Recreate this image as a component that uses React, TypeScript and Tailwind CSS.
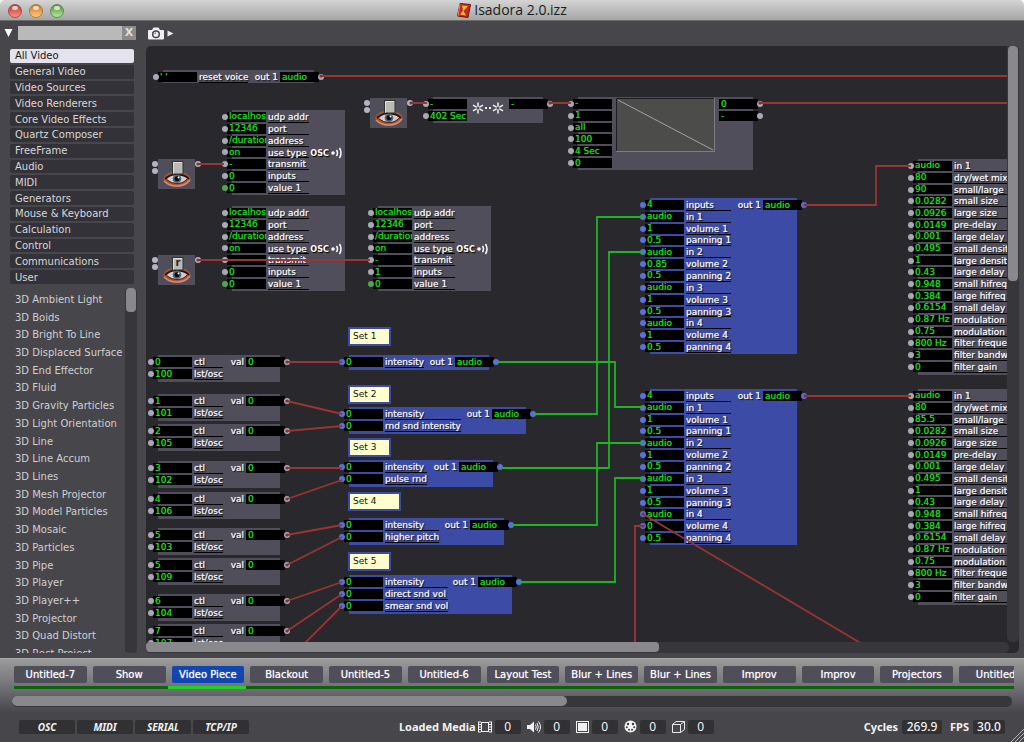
import React from "react";

type Tone = "grey" | "blue";
type Row = [value: string, label?: string];

interface ActorData {
  x: number;
  y: number;
  w: number;
  h: number;
  tone: Tone;
  rows: Row[];
  outs?: Row[];
  greenLast?: boolean;
  extra?: "osc" | "trigger" | "graph";
}

const rowsHeight = (count: number) => Math.round((count * 71) / 6);

const categories = [
  "All Video", "General Video", "Video Sources", "Video Renderers", "Core Video Effects",
  "Quartz Composer", "FreeFrame", "Audio", "MIDI", "Generators", "Mouse & Keyboard",
  "Calculation", "Control", "Communications", "User",
];

const actorNames = [
  "3D Ambient Light", "3D Boids", "3D Bright To Line", "3D Displaced Surface", "3D End Effector",
  "3D Fluid", "3D Gravity Particles", "3D Light Orientation", "3D Line", "3D Line Accum",
  "3D Lines", "3D Mesh Projector", "3D Model Particles", "3D Mosaic", "3D Particles", "3D Pipe",
  "3D Player", "3D Player++", "3D Projector", "3D Quad Distort", "3D Rect Project",
];

const scenes = [
  "Untitled-7", "Show", "Video Piece", "Blackout", "Untitled-5", "Untitled-6", "Layout Test",
  "Blur + Lines", "Blur + Lines", "Improv", "Improv", "Projectors", "Untitled",
];

const oscRows = (transmit: string, inputs: string): Row[] => [
  ["localhost", "udp addr"],
  ["12346", "port"],
  ["/duration", "address"],
  ["on", "use type"],
  [transmit, "transmit"],
  [inputs, "inputs"],
  ["0", "value 1"],
];

const mixerRows = (volume2: string, volume4: string): Row[] => [
  ["4", "inputs"],
  ["audio", "in 1"], ["1", "volume 1"], ["0.5", "panning 1"],
  ["audio", "in 2"], [volume2, "volume 2"], ["0.5", "panning 2"],
  ["audio", "in 3"], ["1", "volume 3"], ["0.5", "panning 3"],
  ["audio", "in 4"], [volume4, "volume 4"], ["0.5", "panning 4"],
];

const reverbRows = (size: string): Row[] => [
  ["audio", "in 1"], ["80", "dry/wet mix"], [size, "small/large"], ["0.0282", "small size"],
  ["0.0926", "large size"], ["0.0149", "pre-delay"], ["0.001", "large delay"],
  ["0.495", "small density"], ["1", "large density"], ["0.43", "large delay"],
  ["0.948", "small hifreq"], ["0.384", "large hifreq"], ["0.6154", "small delay"],
  ["0.87 Hz", "modulation"], ["0.75", "modulation"], ["800 Hz", "filter frequency"],
  ["3", "filter bandwidth"], ["0", "filter gain"],
];

const control = (y: number, value: string, id: string): ActorData => ({
  x: 153, y, w: 132, h: 27, tone: "grey",
  rows: [[value, "ctl"], [id, "lst/osc"]],
  outs: [["0", "val"]],
});

const soundSet = (y: number, w: number, h: number, labels: string[]): ActorData => ({
  x: 344, y, w, h, tone: "blue",
  rows: labels.map((label): Row => ["0", label]),
  outs: [["audio", "out 1"]],
});

const actors: ActorData[] = [
  { x: 158, y: 70, w: 161, h: 13, tone: "grey", rows: [["' '", "reset voice"]], outs: [["audio", "out 1"]] },
  { x: 227, y: 110, w: 118, h: 85, tone: "grey", rows: oscRows("-", "0"), greenLast: true, extra: "osc" },
  { x: 227, y: 206, w: 118, h: 85, tone: "grey", rows: oscRows("", "0"), greenLast: true, extra: "osc" },
  { x: 373, y: 206, w: 118, h: 85, tone: "grey", rows: oscRows("-", "1"), greenLast: true, extra: "osc" },
  { x: 428, y: 97, w: 120, h: 26, tone: "grey", rows: [["-"], ["402 Sec"]], outs: [["-"]], extra: "trigger" },
  {
    x: 573, y: 97, w: 185, h: 73, tone: "grey",
    rows: [["-"], ["1"], ["all"], ["100"], ["4 Sec"], ["0"]],
    outs: [["0"], ["-"]],
    extra: "graph",
  },
  { x: 645, y: 198, w: 157, h: 156, tone: "blue", rows: mixerRows("0.85", "1"), outs: [["audio", "out 1"]] },
  { x: 645, y: 389, w: 157, h: 156, tone: "blue", rows: mixerRows("1", "0"), outs: [["audio", "out 1"]] },
  { x: 913, y: 159, w: 150, h: 216, tone: "grey", rows: reverbRows("90") },
  { x: 913, y: 389, w: 150, h: 216, tone: "grey", rows: reverbRows("85.5") },
  control(355, "0", "100"),
  control(394, "1", "101"),
  control(424, "2", "105"),
  control(461, "3", "102"),
  control(492, "4", "106"),
  control(528, "5", "103"),
  control(558, "5", "109"),
  control(594, "6", "104"),
  control(624, "7", "107"),
  soundSet(355, 150, 15, ["intensity"]),
  soundSet(407, 187, 27, ["intensity", "rnd snd intensity"]),
  soundSet(460, 154, 27, ["intensity", "pulse rnd"]),
  soundSet(518, 165, 27, ["intensity", "higher pitch"]),
  soundSet(575, 173, 39, ["intensity", "direct snd vol", "smear snd vol"]),
];

const notes = [
  { y: 327, w: 43, text: "Set 1" },
  { y: 385, w: 43, text: "Set 2" },
  { y: 438, w: 43, text: "Set 3" },
  { y: 492, w: 53, text: "Set 4" },
  { y: 552, w: 43, text: "Set 5" },
];

const watchers = [
  { x: 158, y: 159, key: "" },
  { x: 158, y: 255, key: "r" },
  { x: 370, y: 98, key: "" },
];

const redWires = [
  "321,76 1010,76",
  "411,103 427,103",
  "550,103 571,103",
  "760,103 1010,103",
  "198,164 224,164",
  "198,260 370,260",
  "287,362 342,362",
  "287,401 342,414",
  "287,431 342,426",
  "287,468 342,468",
  "287,499 342,480",
  "287,535 342,525",
  "287,565 342,537",
  "287,601 342,582",
  "287,631 342,594",
  "298,650 342,606",
  "805,205 876,205 876,166 911,166",
  "805,396 911,396",
  "643,526 635,526 635,650",
  "643,514 874,651",
];

const greenWires = [
  "497,362 615,362 615,407 643,407",
  "534,414 597,414 597,217 643,217",
  "501,468 609,468 609,252 643,252",
  "511,525 597,525 597,443 643,443",
  "519,582 615,582 615,478 643,478",
];

function Dot({ tone, side }: { tone: Tone | "green"; side: "in" | "out" }) {
  const colour = tone === "blue" ? "bg-[#5a70de]" : tone === "green" ? "bg-[#4fa552]" : "bg-[#a9a8b6]";
  const place = side === "in" ? "-left-[5px]" : "-right-[5px]";
  return <i className={`absolute top-1/2 size-[6px] -translate-y-1/2 rounded-full ${colour} ${place}`} />;
}

function Values({ rows, tone, side, greenLast }: { rows: Row[]; tone: Tone; side: "in" | "out"; greenLast?: boolean }) {
  return (
    <div
      className="grid w-[39px] shrink-0 auto-rows-fr grid-cols-[minmax(0,1fr)]"
      style={{ height: rowsHeight(rows.length) }}
    >
      {rows.map(([value], i) => (
        <div key={i} className="relative flex min-h-0 items-center py-px">
          <Dot tone={greenLast && i === rows.length - 1 ? "green" : tone} side={side} />
          <span className="flex h-full w-full items-center overflow-hidden bg-black pl-[2px] text-[#24e024] [text-shadow:0_0_1px_#16a016]">
            {value}
          </span>
        </div>
      ))}
    </div>
  );
}

function Labels({ rows, line }: { rows: Row[]; line: boolean }) {
  return (
    <div className="grid shrink-0 auto-rows-fr" style={{ height: rowsHeight(rows.length) }}>
      {rows.map(([, label], i) => (
        <span
          key={i}
          className={`flex min-h-0 items-center border-b pt-[2px] text-[#f8f8fa] [text-shadow:0_0_1px_#d8d8e0,1px_1px_1px_#000] ${line ? "border-black" : "border-transparent"}`}
        >
          {label}
        </span>
      ))}
    </div>
  );
}

function OscMark() {
  return (
    <span className="absolute top-[37px] right-[2px] flex items-center gap-px text-white [text-shadow:1px_1px_1px_#000]">
      <b className="font-['DejaVu_Sans_Condensed','DejaVu_Sans',sans-serif] text-[9px] leading-[12px]">OSC</b>
      <svg width="13" height="12" viewBox="0 0 13 12" fill="none" stroke="#fff" strokeWidth="1.5">
        <circle cx="3" cy="6" r="1.8" fill="#fff" stroke="none" />
        <path d="M6.5 3Q8.500 6 6.500 9M9.500 1Q12.500 6 9.500 11" />
      </svg>
    </span>
  );
}

function TriggerMark() {
  const star = "M0-5.500V5.500M-5-2.800L5 2.800M-5 2.800L5-2.800";
  return (
    <svg className="absolute top-[3px] left-[43px]" width="34" height="16" viewBox="0 0 34 16" stroke="#f2f2f2" strokeWidth="1.500">
      <g transform="translate(7 8)"><path d={star} /><circle r="1.500" fill="#504e5a" stroke="none" /></g>
      <g transform="translate(27 8)"><path d={star} /><circle r="1.500" fill="#504e5a" stroke="none" /></g>
      <path d="M14 8h2M18 8h2" strokeWidth="2" />
    </svg>
  );
}

function GraphMark() {
  return (
    <svg className="absolute top-px left-[43px]" width="99" height="54" viewBox="0 0 99 54">
      <rect x="0.500" y="0.500" width="98" height="53" fill="#4c4c4b" stroke="#7d7d7a" />
      <path d="M0.500 53V0.500H98" fill="none" stroke="#1c1c20" />
      <path d="M2 2L97 52" stroke="#a2a29f" />
    </svg>
  );
}

function Actor({ actor }: { actor: ActorData }) {
  const { x, y, w, h, tone, rows, outs, greenLast, extra } = actor;
  const labelled = rows.some(([, label]) => label);
  return (
    <section className="absolute" style={{ left: x, top: y, width: w, height: h }}>
      <div
        className={`absolute inset-y-0 left-[5px] ${outs ? "right-[5px]" : "right-0"} ${tone === "blue" ? "bg-[#3b4ba6]" : "bg-[#504e5a]"}`}
      />
      <div className="relative flex gap-[2px] pt-px">
        <Values rows={rows} tone={tone} side="in" greenLast={greenLast} />
        {labelled && <Labels rows={rows} line />}
        {outs && (
          <div className="ml-auto flex gap-[2px]">
            {outs[0][1] && <Labels rows={outs} line={false} />}
            <Values rows={outs} tone={tone} side="out" />
          </div>
        )}
      </div>
      {extra === "osc" && <OscMark />}
      {extra === "trigger" && <TriggerMark />}
      {extra === "graph" && <GraphMark />}
    </section>
  );
}

function Watcher({ x, y, label }: { x: number; y: number; label: string }) {
  return (
    <div className="absolute h-[30px] w-[37px] bg-[#504e5a]" style={{ left: x, top: y }}>
      <i className="absolute top-[2px] -left-[6px] size-[6px] rounded-full bg-[#b4b3c0]" />
      <i className="absolute top-[9px] -left-[6px] size-[6px] rounded-full bg-[#b4b3c0]" />
      <i className="absolute top-[2px] -right-[6px] size-[6px] rounded-full bg-[#b4b3c0]" />
      <svg width="37" height="30" viewBox="0 0 37 30">
        <path d="M5 20Q8 12.500 19 12.500Q30 12.500 33 20Q30 28 19 28Q8 28 5 20Z" fill="#a4553c" />
        <path d="M6 22Q11 27 19 27Q27 27 32 21" fill="none" stroke="#d58d70" strokeWidth="1.600" />
        <path d="M9 20Q13 16 19 16Q26 16 29 19.500Q25 24 19 24Q13 24 9 20Z" fill="#cfccd2" />
        <path d="M7 20Q12 15 19 15.500Q27 15.500 31 20" fill="none" stroke="#2b1512" strokeWidth="1.800" />
        <path d="M9 21Q13 24.500 19 24.500Q26 24.500 29 20" fill="none" stroke="#57281f" />
        <circle cx="19" cy="19.800" r="4.300" fill="#56646f" />
        <circle cx="19" cy="19.800" r="2.500" fill="#0c0d10" />
        <circle cx="20.500" cy="18.500" r="0.900" fill="#fff" />
        <rect x="14.500" y="2.500" width="10.500" height="12.500" fill="#b9b9b5" stroke="#33312f" />
        <path d="M15.500 14.500V3.500H24" fill="none" stroke="#dededb" />
      </svg>
      <b className="absolute inset-x-0 top-[2px] pl-[3px] text-center text-[10px] leading-[12px] text-[#26252a]">{label}</b>
    </div>
  );
}

function Patch() {
  return (
    <div className="absolute -top-[46px] -left-[146px] text-[9px] leading-[9px] whitespace-nowrap">
      {actors.map((actor, i) => <Actor key={i} actor={actor} />)}
      {watchers.map((item, i) => <Watcher key={i} x={item.x} y={item.y} label={item.key} />)}
      {notes.map((note) => (
        <div
          key={note.text}
          className="absolute flex h-[19px] items-center border-2 border-[#3b4ba6] bg-[#ffffce] pl-[3px] text-[#111]"
          style={{ left: 348, top: note.y, width: note.w }}
        >
          {note.text}
        </div>
      ))}
      <svg className="absolute top-0 left-0" width="1100" height="700" fill="none" strokeWidth="1.800">
        {greenWires.map((points) => <polyline key={points} points={points} stroke="#1cb422" />)}
        {redWires.map((points) => <polyline key={points} points={points} stroke="#9b3434" />)}
        {redWires.map((points) => {
          const [cx, cy] = points.split(" ")[0].split(",");
          return <circle key={points} cx={cx} cy={cy} r="1.600" fill="#7c3338" />;
        })}
      </svg>
    </div>
  );
}

function Sidebar() {
  return (
    <aside className="flex w-[146px] shrink-0 flex-col pt-[4px] pb-[5px] text-[10px] leading-[12px]">
      <div className="flex h-[15px] items-center pl-[4px]">
        <button aria-label="Collapse" className="w-[14px]">
          <svg width="9" height="10" viewBox="0 0 9 10"><path d="M0.500 1H8.500L4.500 9Z" fill="#fff" /></svg>
        </button>
        <input aria-label="Search actors" className="h-[14px] w-[104px] bg-[#b9b9b9] px-1 text-black outline-none" />
        <button aria-label="Clear search" className="flex h-[14px] w-[14px] items-center justify-center bg-[#8b8b8c] text-[11px] font-bold text-[#dedede]">X</button>
      </div>
      <div className="mt-[9px] ml-[10px] grid h-[235px] w-[124px] shrink-0 auto-rows-fr gap-[2px]">
        {categories.map((name, i) => (
          <button
            key={name}
            className={`flex min-h-0 items-center rounded-[2px] pt-px pl-[5px] ${i === 0 ? "bg-[#e4e2ec] text-[#17171a]" : "bg-[#333238] text-[#d8d7da]"}`}
          >
            {name}
          </button>
        ))}
      </div>
      <div className="mt-[4px] flex min-h-0 flex-1">
        <div className="w-[125px] overflow-hidden pt-[3px] pl-[15px]">
          <ul className="grid h-[372px] auto-rows-fr text-[#d0cfd2]">
            {actorNames.map((name) => (
              <li key={name} className="flex items-center whitespace-nowrap">{name}</li>
            ))}
          </ul>
        </div>
        <div className="w-[12px] rounded-[4px] bg-[#37363b] px-px">
          <div className="h-[24px] rounded-[4px] bg-[#89888c]" />
        </div>
      </div>
    </aside>
  );
}

function Stage() {
  return (
    <main className="flex min-w-0 flex-1 flex-col pr-[5px] pb-[5px]">
      <div className="flex h-[25px] shrink-0 items-center gap-[3px] pl-[2px]">
        <button aria-label="Snapshot">
          <svg width="16" height="13" viewBox="0 0 16 13">
            <path d="M1 3H4L5.500 0.500H10.500L12 3H15Q16 3 16 4V11.500Q16 12.500 15 12.500H1Q0 12.500 0 11.500V4Q0 3 1 3Z" fill="#f0f0f0" />
            <circle cx="8" cy="7.200" r="3.300" fill="#f0f0f0" stroke="#47464b" strokeWidth="1.500" />
            <path d="M6.800 7Q7 6 8 6" stroke="#47464b" fill="none" />
          </svg>
        </button>
        <button aria-label="Snapshot menu">
          <svg width="7" height="7" viewBox="0 0 7 7"><path d="M0.500 0.500V6.500L6.500 3.500Z" fill="#e8e8e8" /></svg>
        </button>
      </div>
      <div className="flex min-h-0 flex-1 flex-col overflow-hidden rounded-[5px] bg-[#29282c]">
        <div className="flex min-h-0 flex-1">
          <div className="relative min-w-0 flex-1 overflow-hidden">
            <Patch />
          </div>
          <div className="w-[12px] shrink-0 rounded-b-[5px] bg-[#37363b] px-px">
            <div className="h-[235px] rounded-[4px] bg-[#89888c]" />
          </div>
        </div>
        <div className="mr-[10px] h-[11px] shrink-0 rounded-r-[5px] bg-[#37363b]">
          <div className="h-[10px] w-[513px] rounded-[4px] bg-[#89888c]" />
        </div>
      </div>
    </main>
  );
}

function SceneBar() {
  return (
    <nav className="h-[54px] shrink-0 border-t border-[#a9a9a9] bg-linear-to-b from-[#9b9b9b] via-[#747377] to-[#48474c] pt-[7px] text-[10px]">
      <div className="mr-[10px] ml-[14px] overflow-hidden">
        <div className="-ml-[4px] grid w-[1024px] grid-cols-13">
          {scenes.map((name, i) => (
            <div
              key={i}
              className={`border-b-[3px] pr-[2px] pb-[3px] pl-[4px] ${i === 2 ? "border-[#20d022]" : "border-[#0f600f]"}`}
            >
              <button
                className={`flex h-[17px] w-full items-center justify-center rounded-[2px] text-white [text-shadow:0_0_1px_#c8c8d0] ${i === 2 ? "bg-[#1146b0]" : "bg-[#504e59]"}`}
              >
                {name}
              </button>
            </div>
          ))}
        </div>
      </div>
      <div className="mx-[12px] mt-[7px] h-[11px] rounded-[5px] bg-[#37363b]">
        <div className="h-[10px] w-[555px] rounded-[5px] bg-[#89888c]" />
      </div>
    </nav>
  );
}

const mediaIcons: React.ReactNode[] = [
  <svg width="14" height="12" viewBox="0 0 14 12" fill="none" stroke="#f0f0f0">
    <path d="M0.500 0.500V11.500M13.500 0.500V11.500M3.500 1V11M10.500 1V11M3 1.500H11M3 10.500H11" />
    <path d="M2 0.500V12M12 0.500V12" strokeWidth="2" strokeDasharray="1 1.500" />
  </svg>,
  <svg width="14" height="12" viewBox="0 0 14 12" fill="none" stroke="#f0f0f0">
    <path d="M0 4H3L7 0.500V11.500L3 8H0Z" fill="#f0f0f0" stroke="none" />
    <path d="M8.500 3.500Q10 6 8.500 8.500M10 2Q12.500 6 10 10M11.500 0.500Q15.500 6 11.500 11.500" />
  </svg>,
  <svg width="13" height="12" viewBox="0 0 13 12">
    <rect x="0.500" y="0.500" width="12" height="11" fill="#47464b" stroke="#f0f0f0" />
    <rect x="2" y="2" width="9" height="8" fill="#f0f0f0" />
  </svg>,
  <svg width="13" height="13" viewBox="0 0 13 13" fill="#3c3b40">
    <circle cx="6.500" cy="6.500" r="6" fill="#f4f4f4" />
    <circle cx="4" cy="4" r="1.200" /><circle cx="9" cy="4" r="1.200" />
    <circle cx="2.800" cy="7.300" r="1" /><circle cx="10.200" cy="7.300" r="1" />
    <circle cx="5" cy="9.800" r="1" /><circle cx="8" cy="9.800" r="1" />
  </svg>,
  <svg width="13" height="12" viewBox="0 0 13 12" fill="none" stroke="#e8e8e8">
    <path d="M0.500 3.500H8.500V11.500H0.500ZM0.500 3.500L4 0.500H12.500V8.500L8.500 11.500M8.500 3.500L12.500 0.500" />
  </svg>,
];

function StatusBar() {
  return (
    <footer className="relative flex min-h-[30px] items-center justify-between pr-[19px] pb-px pl-[19px] font-['Noto_Sans','Open_Sans',sans-serif] text-[11px] leading-[14px] text-[#f2f2f2]">
      <div className="flex gap-[2px]">
        {["OSC", "MIDI", "SERIAL", "TCP/IP"].map((name) => (
          <span key={name} className="h-[14px] w-[56px] rounded-[2px] bg-[#313033] text-center text-[10px] font-bold italic">
            {name}
          </span>
        ))}
      </div>
      <div className="flex items-center">
        <b>Loaded Media</b>
        {mediaIcons.map((icon, i) => (
          <React.Fragment key={i}>
            <span className={`mr-[3px] ${i === 0 ? "ml-[2px]" : "ml-[6px]"}`}>{icon}</span>
            <span className="h-[14px] w-[26px] rounded-[2px] bg-[#313033] text-center text-[12px]">0</span>
          </React.Fragment>
        ))}
      </div>
      <div className="flex items-center">
        <b>Cycles</b>
        <span className="mr-[8px] ml-[4px] h-[14px] w-[40px] rounded-[2px] bg-[#313033] text-center text-[12px] font-medium">269.9</span>
        <b>FPS</b>
        <span className="ml-[4px] h-[14px] w-[32px] rounded-[2px] bg-[#313033] text-center text-[12px] font-medium">30.0</span>
      </div>
      <svg className="absolute right-0 bottom-0" width="14" height="14" viewBox="0 0 14 14" stroke="#b5b5b5">
        <path d="M1 14L14 1M5 14L14 5M9 14L14 9" />
      </svg>
    </footer>
  );
}

function TitleBar() {
  const lights = [
    { name: "Close", body: "from-[#b8383a] to-[#ff8f80]", edge: "border-[#a84a48]" },
    { name: "Minimise", body: "from-[#c9702a] to-[#ffd07a]", edge: "border-[#b0763c]" },
    { name: "Zoom", body: "from-[#4f9040] to-[#b9ea98]", edge: "border-[#5a8e4c]" },
  ];
  return (
    <header className="relative flex h-[21px] shrink-0 items-center justify-center rounded-t-[5px] border-b border-[#6b6b6b] bg-linear-to-b from-[#d4d4d4] to-[#a6a6a6]">
      <div className="absolute top-[4px] left-[8px] flex gap-[7px]">
        {lights.map((light) => (
          <button key={light.name} aria-label={light.name} className={`relative size-[14px] rounded-full border bg-linear-to-b ${light.body} ${light.edge}`}>
            <i className="absolute top-px left-[3px] h-[4px] w-[6px] rounded-full bg-white/70" />
          </button>
        ))}
      </div>
      <svg width="14" height="15" viewBox="0 0 14 15">
        <path d="M3 0.500L13.500 1.500L11 14.500L0.500 13Z" fill="#c22a1c" stroke="#6e150f" />
        <path d="M5 2.500L11 3L6.500 8L9 12.500L3 11.500L6 7.500Z" fill="#f5b62c" />
        <path d="M1 13L3 1" stroke="#f08a5e" />
      </svg>
      <h1 className="ml-[3px] font-['Open_Sans','Noto_Sans',sans-serif] text-[14px] leading-[18px] text-[#1c1c1c]">Isadora 2.0.izz</h1>
    </header>
  );
}

export default function App() {
  return (
    <div className="flex h-screen flex-col overflow-hidden bg-white font-['DejaVu_Sans',Verdana,sans-serif]">
      <TitleBar />
      <div className="flex min-h-0 flex-1 flex-col bg-[#47464b]">
        <div className="flex min-h-0 flex-1">
          <Sidebar />
          <Stage />
        </div>
        <SceneBar />
        <StatusBar />
      </div>
    </div>
  );
}
